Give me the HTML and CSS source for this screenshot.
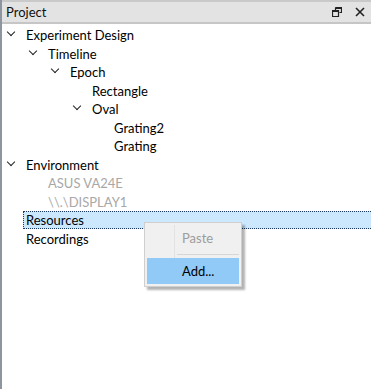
FILE: index.html
```html
<!DOCTYPE html>
<html lang="en">
<head>
    <meta charset="UTF-8">
    <title>Project</title>
    <link rel="stylesheet" href="styles.css">
</head>
<body>
    <div class="panel">
        <div class="panel-header">
            <span class="panel-title">Project</span>
            <span class="panel-buttons">
                <svg class="btn-float" width="10" height="10" viewBox="0 0 10 10">
                    <path d="M3.5 0.5h6v5h-2M0.5 3.5h6v6h-6z M3.5 0.5v3" fill="none" stroke="#222" stroke-width="1.2"/>
                    <path d="M3.5 1.2h5.5M0.5 4.2h5.5" stroke="#222" stroke-width="1.4"/>
                </svg>
                <svg class="btn-close" width="10" height="10" viewBox="0 0 10 10">
                    <path d="M1 1l8 8M9 1l-8 8" stroke="#222" stroke-width="1.6"/>
                </svg>
            </span>
        </div>

        <ul class="tree">
            <li class="row lvl-0"><span class="arrow"></span>Experiment Design</li>
            <li class="row lvl-1"><span class="arrow"></span>Timeline</li>
            <li class="row lvl-2"><span class="arrow"></span>Epoch</li>
            <li class="row lvl-3"><span class="no-arrow"></span>Rectangle</li>
            <li class="row lvl-3"><span class="arrow"></span>Oval</li>
            <li class="row lvl-4"><span class="no-arrow"></span>Grating2</li>
            <li class="row lvl-4"><span class="no-arrow"></span>Grating</li>
            <li class="row lvl-0"><span class="arrow"></span>Environment</li>
            <li class="row lvl-1 disabled"><span class="no-arrow"></span>ASUS VA24E</li>
            <li class="row lvl-1 disabled"><span class="no-arrow"></span>\\.\DISPLAY1</li>
            <li class="row selected"><span class="sel-box">Resources</span></li>
            <li class="row lvl-0"><span class="no-arrow"></span>Recordings</li>
        </ul>

        <div class="context-menu">
            <div class="menu-item disabled"><span class="menu-gutter"></span><span class="menu-label">Paste</span></div>
            <div class="menu-sep"><span class="menu-gutter"></span><span class="sep-line"></span></div>
            <div class="menu-item active"><span class="menu-gutter"></span><span class="menu-label">Add...</span></div>
        </div>
    </div>
</body>
</html>
```
FILE: styles.css
```css
body {
    margin: 0;
    font-family: Lato, 'Open Sans', sans-serif;
    font-size: 13px;
    color: #000;
    background-color: #fff;
}

.panel {
    position: relative;
    height: 389px;
    border-left: 2px solid #8d95a0;
    box-sizing: border-box;
}

.panel-header {
    display: flex;
    align-items: center;
    justify-content: space-between;
    height: 20px;
    background-color: #e3e3e3;
    border-top: 2px solid #c9c9c9;
    border-bottom: 2px solid #c6c6c6;
    padding: 0 6px 0 4px;
}

.panel-title {
    font-size: 13px;
    color: #111;
}

.panel-buttons {
    display: flex;
    align-items: center;
    gap: 13px;
}

.tree {
    list-style: none;
    margin: 0;
    padding: 2px 0 0 0;
}

.row {
    display: flex;
    align-items: center;
    height: 18.5px;
    white-space: nowrap;
}

.lvl-0 { padding-left: 4px; }
.lvl-1 { padding-left: 26px; }
.lvl-2 { padding-left: 48px; }
.lvl-3 { padding-left: 70px; }
.lvl-4 { padding-left: 92px; }

.arrow, .no-arrow {
    display: inline-block;
    width: 20px;
    height: 10px;
    flex-shrink: 0;
}

.arrow {
    position: relative;
}

.arrow::before {
    content: "";
    position: absolute;
    left: 2px;
    top: -1px;
    width: 5px;
    height: 5px;
    border-right: 1.6px solid #222;
    border-bottom: 1.6px solid #222;
    transform: rotate(45deg);
}

.disabled {
    color: #a8a8a8;
}

.selected {
    padding-left: 21px;
}

.sel-box {
    flex: 1;
    display: flex;
    align-items: center;
    height: 16px;
    padding-left: 2px;
    background-color: #cce8ff;
    border: 1px dotted #1a3a5c;
    border-right: none;
}

.context-menu {
    position: absolute;
    left: 142px;
    top: 222px;
    width: 92px;
    padding: 2px;
    background-color: #f0f0f0;
    border: 1px solid #cfcfcf;
    box-shadow: 3px 3px 2px rgba(0, 0, 0, 0.3);
}

.menu-item {
    display: flex;
    align-items: center;
    height: 26px;
}

.menu-gutter {
    width: 27px;
    height: 100%;
    border-right: 1px solid #e2e2e2;
    flex-shrink: 0;
}

.menu-label {
    padding-left: 7px;
}

.menu-item.disabled .menu-label {
    color: #9c9c9c;
}

.menu-item.active {
    background-color: #91c9f7;
}

.menu-item.active .menu-gutter {
    border-right-color: transparent;
}

.menu-sep {
    display: flex;
    height: 7px;
    align-items: center;
}

.menu-sep .menu-gutter {
    height: 7px;
}

.sep-line {
    flex: 1;
    margin-left: 2px;
    border-top: 1px solid #d7d7d7;
}
```
